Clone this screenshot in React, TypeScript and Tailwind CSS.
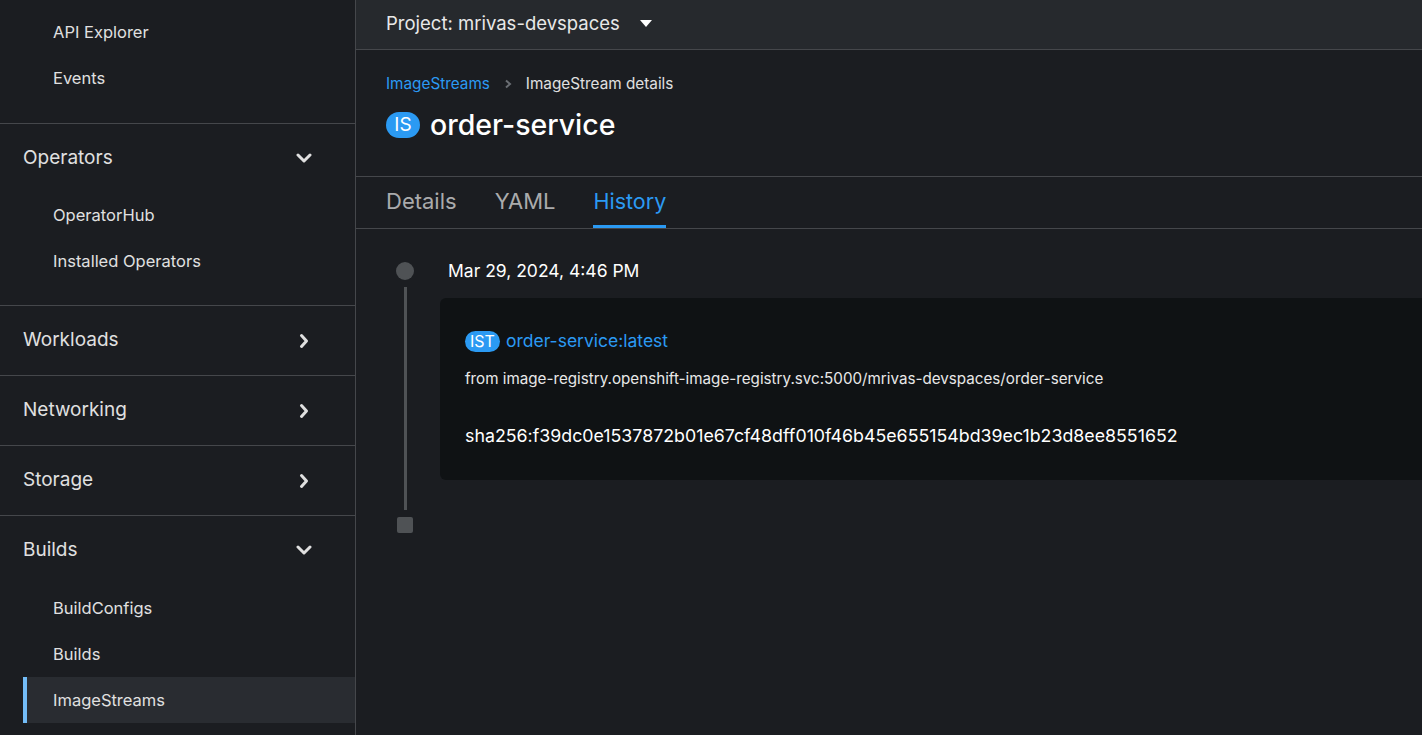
import React from "react";

const font = { fontFamily: 'Inter, "Noto Sans", sans-serif' };

function ChevronDown() {
  return (
    <svg width="16" height="10" viewBox="0 0 16 10" className="text-[#e0e0e0]">
      <path d="M2 2 L8 8 L14 2" fill="none" stroke="currentColor" strokeWidth="3" strokeLinecap="round" strokeLinejoin="round" />
    </svg>
  );
}

function ChevronRight() {
  return (
    <svg width="10" height="16" viewBox="0 0 10 16" className="text-[#e0e0e0]">
      <path d="M2.5 2.5 L7.5 8 L2.5 13.5" fill="none" stroke="currentColor" strokeWidth="3" strokeLinecap="round" strokeLinejoin="round" />
    </svg>
  );
}

function SubItem({ label, active }: { label: string; active?: boolean }) {
  return (
    <div
      className={
        "ml-[23px] flex h-[46px] items-center text-[16.5px] text-[#e0e0e0] " +
        (active ? "border-l-[4px] border-[#73bcf7] bg-[#292c31] pl-[26px]" : "pl-[30px]")
      }
    >
      {label}
    </div>
  );
}

function Collapsed({ label }: { label: string }) {
  return (
    <div className="flex h-[70px] items-center justify-between border-b border-[#45474b] pl-[23px] pr-[46px] text-[19px] text-[#e0e0e0]">
      <span>{label}</span>
      <ChevronRight />
    </div>
  );
}

function ExpandedHeader({ label }: { label: string }) {
  return (
    <div className="flex h-[67px] items-center justify-between pl-[23px] pr-[43px] pt-[1px] text-[19px] text-[#e0e0e0]">
      <span>{label}</span>
      <ChevronDown />
    </div>
  );
}

export default function App() {
  return (
    <div className="flex h-[735px] w-[1422px] overflow-hidden bg-[#1b1d21]" style={font}>
      <aside className="w-[356px] shrink-0 border-r border-[#45474b] bg-[#1b1d21]">
        <div className="border-b border-[#45474b] pt-[9px] pb-[22px]">
          <SubItem label="API Explorer" />
          <SubItem label="Events" />
        </div>
        <div className="border-b border-[#45474b] pb-[21px]">
          <ExpandedHeader label="Operators" />
          <div className="pt-[1px]">
            <SubItem label="OperatorHub" />
            <SubItem label="Installed Operators" />
          </div>
        </div>
        <Collapsed label="Workloads" />
        <Collapsed label="Networking" />
        <Collapsed label="Storage" />
        <div>
          <ExpandedHeader label="Builds" />
          <div className="pt-[2px]">
            <SubItem label="BuildConfigs" />
            <SubItem label="Builds" />
            <SubItem label="ImageStreams" active />
          </div>
        </div>
      </aside>

      <main className="flex min-w-0 flex-1 flex-col">
        <div className="flex h-[50px] items-center gap-[20px] border-b border-[#45474b] bg-[#26292d] pb-[2px] pl-[30px]">
          <span className="text-[18.5px] text-[#e8e8e8]">Project: mrivas-devspaces</span>
          <svg width="12" height="8" viewBox="0 0 12 8">
            <path d="M0 0 L12 0 L6 7 Z" fill="#ffffff" />
          </svg>
        </div>

        <div className="border-b border-[#45474b] pl-[30px] pt-[23px] pb-[33px]">
          <div className="flex items-center text-[15.3px]">
            <span className="text-[#2b9af3]">ImageStreams</span>
            <svg width="8" height="10" viewBox="0 0 8 10" className="mx-[14px]">
              <path d="M2 1.5 L6 5 L2 8.5" fill="none" stroke="#6a6e73" strokeWidth="2" />
            </svg>
            <span className="text-[#e0e0e0]">ImageStream details</span>
          </div>
          <div className="mt-[11px] flex items-center gap-[10px]">
            <span className="flex h-[26px] w-[34px] items-center justify-center rounded-full bg-[#2b9af3] text-[19px] text-white">IS</span>
            <span className="text-[28.5px] font-medium leading-[36px] text-white">order-service</span>
          </div>
        </div>

        <div className="flex gap-[38px] border-b border-[#45474b] pl-[30px]">
          <div className="flex h-[51px] items-center border-b-[3px] border-transparent pt-[1px] text-[22px] text-[#aaabac]">Details</div>
          <div className="flex h-[51px] items-center border-b-[3px] border-transparent pt-[1px] text-[22px] text-[#aaabac]">YAML</div>
          <div className="flex h-[51px] items-center border-b-[3px] border-[#2b9af3] pt-[1px] text-[21.5px] text-[#2b9af3]">History</div>
        </div>

        <div className="flex pl-[40px] pt-[33px]">
          <div className="flex w-[18px] flex-col items-center">
            <div className="h-[18px] w-[18px] rounded-full bg-[#4f5255]" />
            <div className="mt-[7px] h-[223px] w-[3px] bg-[#4f5255]" />
            <div className="mt-[7px] h-[16px] w-[16px] rounded-[2px] bg-[#4f5255]" />
          </div>
          <div className="ml-[26px] flex-1">
            <div className="pl-[8px] text-[17.5px] leading-[18px] text-white">Mar 29, 2024, 4:46 PM</div>
            <div className="mt-[18px] h-[182px] rounded-l-[6px] bg-[#0f1214] pl-[25px] pt-[30px]">
              <div className="flex items-center gap-[6px]">
                <span className="flex h-[21px] w-[35px] items-center justify-center rounded-full bg-[#2b9af3] text-[16px] text-white">IST</span>
                <span className="text-[17.5px] text-[#2b9af3]">order-service:latest</span>
              </div>
              <div className="mt-[14px] text-[15.2px] text-[#e8e8e8]">
                from image-registry.openshift-image-registry.svc:5000/mrivas-devspaces/order-service
              </div>
              <div className="mt-[32px] text-[17.8px] text-white">
                sha256:f39dc0e1537872b01e67cf48dff010f46b45e655154bd39ec1b23d8ee8551652
              </div>
            </div>
          </div>
        </div>
      </main>
    </div>
  );
}
